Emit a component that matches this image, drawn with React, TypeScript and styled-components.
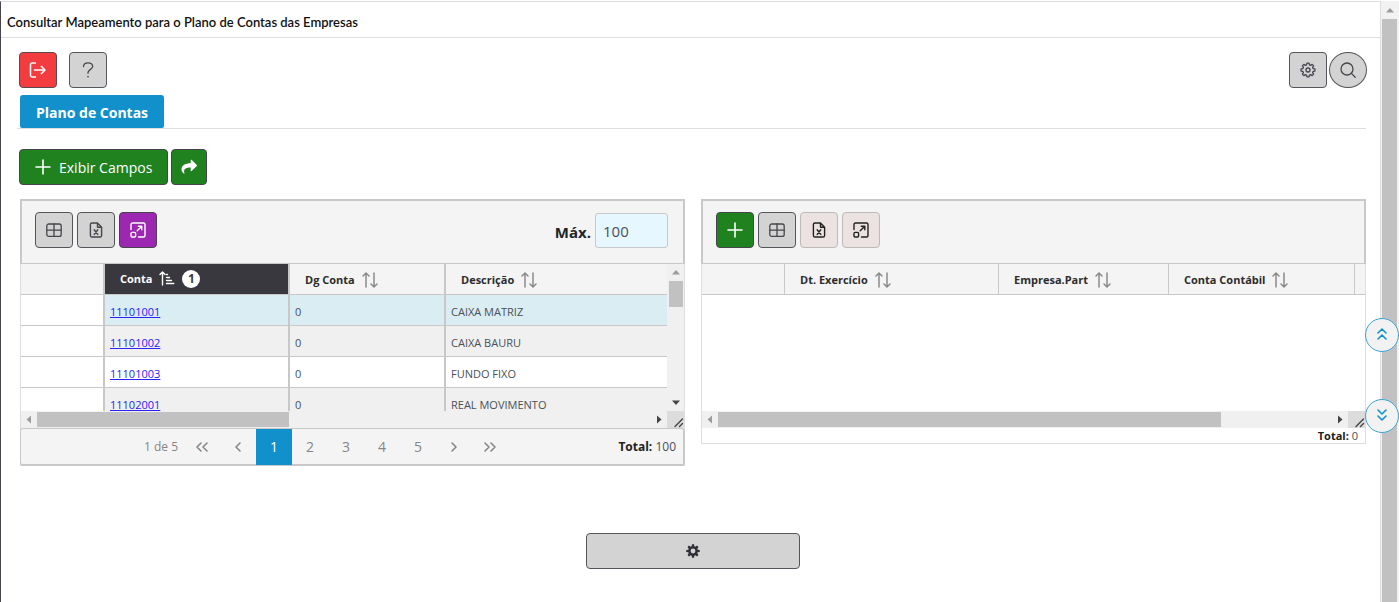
import React from "react";
import styled, { createGlobalStyle, css } from "styled-components";

const LINE = "#c8c8c8";
const LIGHT = "#dedede";
const PANEL = "#f4f4f4";
const BLUE = "#1190cb";
const GREEN = "#20811f";

const GlobalStyle = createGlobalStyle`
  * { box-sizing: border-box; }
  body {
    margin: 0;
    background: #fff;
    color: #212529;
    font-family: "Open Sans", "Noto Sans", sans-serif;
  }
  button, input { font-family: inherit; }
`;

const Page = styled.div`
  display: grid;
  grid-template-columns: minmax(0, 1fr) 18px;
  min-height: 100vh;
  padding-top: 1px;
`;

const Main = styled.main`
  border: 1px solid ${LIGHT};
  border-left-color: #46444f;
  border-bottom: 0;
  display: flex;
  flex-direction: column;
`;

const TitleBar = styled.header`
  height: 36px;
  padding: 0 6px;
  display: flex;
  align-items: center;
  border-bottom: 1px solid ${LIGHT};
`;

const Title = styled.h1`
  margin: 4px 0 0;
  font: 600 13px/20px Lato, sans-serif;
  color: #111;
`;

const Body = styled.div`
  padding: 14px 13px 0 18px;
`;

const Bar = styled.div<{ $gap: number }>`
  display: flex;
  align-items: center;
  gap: ${(p) => p.$gap}px;
`;

const Spacer = styled.span`
  flex: 1;
`;

type Tone = "gray" | "red" | "green" | "purple" | "muted";

const tones: Record<Tone, ReturnType<typeof css>> = {
  gray: css`background: #d3d3d3; color: #46464c; border-color: #55555c;`,
  red: css`background: #f23c3f; color: #fff; border-color: #5c4a50;`,
  green: css`background: ${GREEN}; color: #fff; border-color: #46444c;`,
  purple: css`background: #9c27b0; color: #fff; border-color: #46444c;`,
  muted: css`background: #ece2e2; color: #222; border-color: #bdb9b9;`,
};

const Button = styled.button<{ $tone: Tone; $round?: boolean; $size?: "wide" | "narrow" }>`
  display: inline-flex;
  align-items: center;
  justify-content: center;
  gap: 8px;
  height: 36px;
  min-width: ${(p) => (p.$size === "narrow" ? 36 : 38)}px;
  padding: ${(p) => (p.$size === "wide" ? "0 15px" : "0")};
  border: 1px solid;
  border-radius: ${(p) => (p.$round ? "50%" : "4px")};
  font-size: 14px;
  cursor: pointer;
  ${(p) => tones[p.$tone]}
`;

const Tabs = styled.div`
  display: flex;
  padding: 7px 0 0 3px;
  margin: 0 1px 20px -2px;
  border-bottom: 1px solid ${LIGHT};
`;

const Tab = styled.button`
  height: 33px;
  padding: 1px 16px 0;
  border: 0;
  border-radius: 3px 3px 2px 2px;
  background: ${BLUE};
  color: #fff;
  font-size: 14px;
  font-weight: 700;
`;

const Panels = styled.div`
  display: grid;
  grid-template-columns: minmax(0, 1fr) minmax(0, 1fr);
  align-items: start;
  gap: 16px;
  padding: 14px 1px 0;
`;

const Panel = styled.section`
  border: 1px solid ${LIGHT};
`;

const PanelTop = styled.div`
  display: flex;
  align-items: center;
  gap: 4px;
  height: 65px;
  margin: -1px -1px 0;
  padding: 0 15px 4px 13px;
  background: ${PANEL};
  border: 2px solid ${LINE};
  border-bottom: 1px solid ${LINE};
`;

const MaxLabel = styled.label`
  font-size: 15px;
  font-weight: 700;
  padding-top: 3px;
`;

const MaxInput = styled.input`
  width: 73px;
  height: 35px;
  padding: 2px 7px 0;
  border: 1px solid ${LINE};
  border-radius: 3px;
  background: #e6f7ff;
  color: #495057;
  font-size: 15px;
`;

const View = styled.div`
  display: grid;
  grid-template-columns: minmax(0, 1fr) auto;
  grid-template-rows: 147px 17px;
`;

const Clip = styled.div<{ $full?: boolean }>`
  overflow: hidden;
  ${(p) => p.$full && css`grid-column: 1 / -1;`}
`;

const Table = styled.table`
  width: 100%;
  table-layout: fixed;
  border-collapse: separate;
  border-spacing: 0;
`;

const Col = styled.col<{ $w?: number }>`
  width: ${(p) => (p.$w ? `${p.$w}px` : "auto")};
`;

const Th = styled.th<{ $active?: boolean; $thick?: boolean }>`
  height: 31px;
  padding: 0 0 0 15px;
  text-align: left;
  font-size: 11px;
  line-height: 16px;
  font-weight: 700;
  white-space: nowrap;
  background: ${(p) => (p.$active ? "#38383e" : PANEL)};
  color: ${(p) => (p.$active ? "#fff" : "#2c2c2c")};
  border-right: ${(p) => (p.$thick ? 2 : 1)}px solid ${LINE};
  border-bottom: 1px solid ${LINE};
  &:last-child { border-right: 0; }
`;

const Td = styled.td`
  height: 31px;
  padding: 3px 0 0 5px;
  font-size: 11px;
  line-height: 16px;
  color: #495057;
  white-space: nowrap;
  border-right: 2px solid ${LINE};
  border-bottom: 1px solid ${LINE};
  &:last-child { border-right: 0; }
`;

const Row = styled.tr<{ $bg: string }>`
  background: ${(p) => p.$bg};
  td:first-child { background: #fff; }
`;

const Link = styled.a`
  color: #2a22f5;
  text-decoration: underline;
`;

const HeadLabel = styled.span`
  display: inline-flex;
  align-items: center;
  gap: 7px;
  vertical-align: middle;
`;

const Badge = styled.span`
  width: 18px;
  height: 18px;
  border-radius: 50%;
  background: #fff;
  color: #38383e;
  font-size: 12px;
  line-height: 18px;
  text-align: center;
`;

const ScrollTrack = styled.div<{ $vertical?: boolean }>`
  display: flex;
  flex-direction: ${(p) => (p.$vertical ? "column" : "row")};
  align-items: center;
  background: #f0f0f0;
  min-width: 17px;
`;

const ThumbLane = styled.div<{ $vertical?: boolean }>`
  flex: 1;
  align-self: stretch;
  padding: ${(p) => (p.$vertical ? "0 1px 0 2px" : "1px 0")};
`;

const Thumb = styled.div<{ $size: number; $vertical?: boolean }>`
  background: #c1c1c1;
  ${(p) =>
    p.$vertical
      ? css`height: ${p.$size}%;`
      : css`width: ${p.$size}%; height: 100%;`}
`;

const Corner = styled.div`
  width: 17px;
  height: 17px;
  background: #dcdcdc;
`;

const Paginator = styled.nav`
  display: flex;
  align-items: center;
  height: 38px;
  margin: 0 -1px -1px;
  padding: 0 7px 0 123px;
  border: 1px solid ${LINE};
  border-bottom-width: 2px;
  border-right-width: 2px;
  border-radius: 3px;
  background: ${PANEL};
  color: #868686;
  font-size: 12px;
`;

const PageInfo = styled.span`
  width: 40px;
  white-space: nowrap;
`;

const PageButton = styled.button<{ $active?: boolean }>`
  display: flex;
  align-items: center;
  justify-content: center;
  width: 36px;
  height: 36px;
  flex: none;
  padding: 0;
  border: 0;
  background: ${(p) => (p.$active ? BLUE : "transparent")};
  color: ${(p) => (p.$active ? "#fff" : "#868686")};
  font-size: 14px;
`;

const Total = styled.span<{ $small?: boolean }>`
  font-size: ${(p) => (p.$small ? 11 : 12)}px;
  color: #495057;
  white-space: nowrap;
  b { color: #222; }
`;

const PanelFoot = styled.div`
  display: flex;
  justify-content: flex-end;
  height: 15px;
  line-height: 15px;
  padding-right: 7px;
`;

const Footer = styled.footer`
  display: flex;
  justify-content: center;
  padding: 67px 0 32px;
`;

const FooterButton = styled(Button)`
  width: 214px;
`;

const PageScroll = styled.aside`
  display: flex;
  flex-direction: column;
  align-items: center;
  background: #f2f2f2;
  padding: 1px 2px 0 1px;
`;

const PageThumb = styled.div`
  flex: 1;
  align-self: stretch;
  background: #c1c1c1;
`;

const Floating = styled.div`
  position: fixed;
  right: 0;
  top: 318px;
  display: flex;
  flex-direction: column;
  gap: 47px;
`;

const RoundButton = styled.button`
  display: flex;
  align-items: center;
  justify-content: center;
  width: 34px;
  height: 34px;
  padding: 0 0 3px;
  border: 1px solid #39a3d3;
  border-radius: 50%;
  background: #f2f2f2;
  color: ${BLUE};
`;

const Svg = styled.svg`
  display: block;
  flex: none;
`;

type IconProps = { w?: number; h?: number; sw?: number; children: React.ReactNode };

const Icon = ({ w = 16, h = 16, sw = 1.2, children }: IconProps) => (
  <Svg
    width={w}
    height={h}
    viewBox={`0 0 ${w} ${h}`}
    fill="none"
    stroke="currentColor"
    strokeWidth={sw}
    strokeLinecap="round"
    strokeLinejoin="round"
    aria-hidden="true"
  >
    {children}
  </Svg>
);

const ExitIcon = () => (
  <Icon w={18} sw={1.5}>
    <path d="M6.5 1H3.2Q1.5 1 1.5 2.7V13.3Q1.5 15 3.2 15H6.5M5.5 8H16M12.3 4.2L16 8L12.3 11.8" />
  </Icon>
);
const QuestionIcon = () => (
  <Icon sw={1.3}>
    <path d="M3.5 4.5C3.5 2.3 5.3 .8 8 .8S12.7 2.4 12.7 4.6C12.7 7.2 8 7.6 8 10.6V11.2" />
    <circle cx="8" cy="14.6" r=".6" fill="currentColor" stroke="none" />
    <path d="M8 14.5V14.8" />
  </Icon>
);
const gearPoints = (cx: number, cy: number, ro: number, ri: number, teeth: number) => {
  const pts: string[] = [];
  for (let i = 0; i < teeth; i++) {
    const base = (i / teeth) * Math.PI * 2 - Math.PI / 2;
    const step = Math.PI / teeth;
    [
      [ri, -0.72],
      [ro, -0.38],
      [ro, 0.38],
      [ri, 0.72],
    ].forEach(([r, k]) => {
      const a = base + k * step;
      pts.push(`${(cx + r * Math.cos(a)).toFixed(2)} ${(cy + r * Math.sin(a)).toFixed(2)}`);
    });
  }
  return `M${pts.join("L")}Z`;
};
const GearIcon = () => (
  <Icon sw={1.3}>
    <path d={gearPoints(8, 8, 7, 5.3, 8)} />
    <circle cx="8" cy="8" r="2" />
  </Icon>
);
const SolidGearIcon = () => (
  <Icon w={14} h={14} sw={0}>
    <path
      d={`${gearPoints(7, 7, 6.8, 4.9, 8)}M7 4.6a2.4 2.4 0 1 0 0 4.8a2.4 2.4 0 1 0 0-4.8Z`}
      fill="#2f2f38"
      fillRule="evenodd"
    />
  </Icon>
);
const SearchIcon = () => (
  <Icon sw={1.3}>
    <circle cx="7" cy="7" r="6" />
    <path d="M11.4 11.4L15.2 15.2" />
  </Icon>
);
const PlusIcon = () => (
  <Icon sw={1.6}>
    <path d="M8 1V15M1 8H15" />
  </Icon>
);
const ShareIcon = () => (
  <Icon sw={0}>
    <path
      d="M9.7 1.2V4.3C4 4.4 .5 6.3 .5 10.6C.5 12.3 1.5 13.8 2.8 14.6C3.2 14.8 3.5 14.5 3.4 14C2.2 10.2 4.4 8.7 9.7 8.6V11.7C9.7 12.2 10.2 12.4 10.6 12.1L15.8 7C16.1 6.7 16.1 6.3 15.8 6L10.6 .8C10.2 .5 9.7 .7 9.7 1.2Z"
      fill="currentColor"
    />
  </Icon>
);
const TableIcon = () => (
  <Icon sw={1.3}>
    <rect x=".8" y="2" width="14.4" height="12.4" rx="2" />
    <path d="M8 2V14.4M.8 8.2H15.2" />
  </Icon>
);
const ExcelIcon = () => (
  <Icon sw={1.4}>
    <path d="M9.5 1H4Q2.4 1 2.4 2.6V13.4Q2.4 15 4 15H12Q13.6 15 13.6 13.4V5.2ZM9.5 1V5.2H13.6M6.2 7.8L9.8 12.4M9.8 7.8L6.2 12.4" />
  </Icon>
);
const ExpandIcon = () => (
  <Icon sw={1.4}>
    <rect x="1" y="10.4" width="4.6" height="4.6" rx="1" />
    <path d="M1 7.5V2.5Q1 1 2.5 1H13.5Q15 1 15 2.5V13.5Q15 15 13.5 15H8.5M7.2 8.8L11.6 4.4M8.3 4.2H11.8V7.7" />
  </Icon>
);
const SortIcon = () => (
  <Svg width="16" height="16" viewBox="0 0 16 16" fill="none" stroke="#8b8b8b" strokeWidth="1.5" strokeLinecap="round" strokeLinejoin="round" aria-hidden="true">
    <path d="M4 15V1.2M1 4L4 1L7 4M12 1V14.8M9 12L12 15L15 12" />
  </Svg>
);
const SortedIcon = () => (
  <Icon sw={1.4}>
    <path d="M3.5 14V1.2M1 3.6L3.5 1L6 3.6M7.5 3.5H8.5M7.5 6.5H10.5M7.5 9.5H12.5M7.5 12.5H14.8" />
  </Icon>
);
const Chevrons = ({ dir, double }: { dir: "left" | "right" | "up" | "down"; double?: boolean }) => {
  const turn = { left: 0, up: 90, right: 180, down: 270 }[dir];
  return (
    <Icon w={14} h={14} sw={1.6}>
      <g transform={`rotate(${turn} 7 7)`}>
        <path d={double ? "M6 3L2 7L6 11M12 3L8 7L12 11" : "M9 3L5 7L9 11"} />
      </g>
    </Icon>
  );
};
const Arrow = ({ dir, dark }: { dir: "left" | "right" | "up" | "down"; dark?: boolean }) => {
  const turn = { left: 0, up: 90, right: 180, down: 270 }[dir];
  return (
    <Svg width="16" height="17" viewBox="0 0 16 17" aria-hidden="true">
      <path d="M5.5 8.5L10 4.5V12.5Z" fill={dark ? "#444" : "#9c9c9c"} transform={`rotate(${turn} 8 8.5)`} />
    </Svg>
  );
};
const Grip = () => (
  <Icon w={17} h={17} sw={1.4}>
    <path d="M8 15.5L15.5 8M12.5 15.5L15.5 12.5" stroke="#444" />
  </Icon>
);

const Scroll = ({ size, vertical }: { size: number; vertical?: boolean }) => (
  <ScrollTrack $vertical={vertical}>
    <Arrow dir={vertical ? "up" : "left"} />
    <ThumbLane $vertical={vertical}>
      <Thumb $size={size} $vertical={vertical} />
    </ThumbLane>
    <Arrow dir={vertical ? "down" : "right"} dark />
  </ScrollTrack>
);

const accounts = [
  { code: "11101001", digit: "0", name: "CAIXA MATRIZ", bg: "#d9edf3" },
  { code: "11101002", digit: "0", name: "CAIXA BAURU", bg: "#f0f0f0" },
  { code: "11101003", digit: "0", name: "FUNDO FIXO", bg: "#ffffff" },
  { code: "11102001", digit: "0", name: "REAL MOVIMENTO", bg: "#f0f0f0" },
];

const SortableHead = ({ children, thick }: { children: string; thick?: boolean }) => (
  <Th scope="col" $thick={thick}>
    <HeadLabel>
      {children}
      <SortIcon />
    </HeadLabel>
  </Th>
);

const AccountsPanel = () => (
  <Panel>
    <PanelTop>
      <Button $tone="gray" aria-label="Colunas"><TableIcon /></Button>
      <Button $tone="gray" aria-label="Exportar Excel"><ExcelIcon /></Button>
      <Button $tone="purple" aria-label="Expandir"><ExpandIcon /></Button>
      <Spacer />
      <MaxLabel htmlFor="max">Máx.</MaxLabel>
      <MaxInput id="max" defaultValue="100" />
    </PanelTop>
    <View>
      <Clip>
        <Table>
          <colgroup>
            <Col $w={84} />
            <Col $w={185} />
            <Col $w={156} />
            <Col />
          </colgroup>
          <thead>
            <tr>
              <Th $thick />
              <Th scope="col" $active $thick>
                <HeadLabel>
                  Conta
                  <SortedIcon />
                  <Badge>1</Badge>
                </HeadLabel>
              </Th>
              <SortableHead thick>Dg Conta</SortableHead>
              <SortableHead>Descrição</SortableHead>
            </tr>
          </thead>
          <tbody>
            {accounts.map((a) => (
              <Row key={a.code} $bg={a.bg}>
                <Td />
                <Td><Link href={`#${a.code}`}>{a.code}</Link></Td>
                <Td>{a.digit}</Td>
                <Td>{a.name}</Td>
              </Row>
            ))}
          </tbody>
        </Table>
      </Clip>
      <Scroll vertical size={23} />
      <Scroll size={41} />
      <Corner><Grip /></Corner>
    </View>
    <Paginator aria-label="Paginação">
      <PageInfo>1 de 5</PageInfo>
      <PageButton aria-label="Primeira"><Chevrons dir="left" double /></PageButton>
      <PageButton aria-label="Anterior"><Chevrons dir="left" /></PageButton>
      {[1, 2, 3, 4, 5].map((n) => (
        <PageButton key={n} $active={n === 1}>{n}</PageButton>
      ))}
      <PageButton aria-label="Próxima"><Chevrons dir="right" /></PageButton>
      <PageButton aria-label="Última"><Chevrons dir="right" double /></PageButton>
      <Spacer />
      <Total><b>Total:</b> 100</Total>
    </Paginator>
  </Panel>
);

const MappingPanel = () => (
  <Panel>
    <PanelTop>
      <Button $tone="green" aria-label="Adicionar"><PlusIcon /></Button>
      <Button $tone="gray" aria-label="Colunas"><TableIcon /></Button>
      <Button $tone="muted" aria-label="Exportar Excel"><ExcelIcon /></Button>
      <Button $tone="muted" aria-label="Expandir"><ExpandIcon /></Button>
    </PanelTop>
    <View>
      <Clip $full>
        <Table>
          <colgroup>
            <Col $w={83} />
            <Col $w={214} />
            <Col $w={170} />
            <Col $w={186} />
            <Col />
          </colgroup>
          <thead>
            <tr>
              <Th />
              <SortableHead>Dt. Exercício</SortableHead>
              <SortableHead>Empresa.Part</SortableHead>
              <SortableHead>Conta Contábil</SortableHead>
              <Th />
            </tr>
          </thead>
          <tbody />
        </Table>
      </Clip>
      <Scroll size={82} />
      <Corner><Grip /></Corner>
    </View>
    <PanelFoot>
      <Total $small><b>Total:</b> 0</Total>
    </PanelFoot>
  </Panel>
);

export default function App() {
  return (
    <>
      <GlobalStyle />
      <Page>
        <Main>
          <TitleBar>
            <Title>Consultar Mapeamento para o Plano de Contas das Empresas</Title>
          </TitleBar>
          <Body>
            <Bar $gap={12}>
              <Button $tone="red" aria-label="Sair"><ExitIcon /></Button>
              <Button $tone="gray" aria-label="Ajuda"><QuestionIcon /></Button>
              <Spacer />
              <Bar $gap={2}>
                <Button $tone="gray" aria-label="Configurações"><GearIcon /></Button>
                <Button $tone="gray" $round aria-label="Pesquisar"><SearchIcon /></Button>
              </Bar>
            </Bar>
            <Tabs role="tablist">
              <Tab role="tab" aria-selected="true">Plano de Contas</Tab>
            </Tabs>
            <Bar $gap={3}>
              <Button $tone="green" $size="wide"><PlusIcon />Exibir Campos</Button>
              <Button $tone="green" $size="narrow" aria-label="Compartilhar"><ShareIcon /></Button>
            </Bar>
            <Panels>
              <AccountsPanel />
              <MappingPanel />
            </Panels>
            <Footer>
              <FooterButton $tone="gray" aria-label="Opções"><SolidGearIcon /></FooterButton>
            </Footer>
          </Body>
        </Main>
        <PageScroll>
          <Arrow dir="up" />
          <PageThumb />
        </PageScroll>
      </Page>
      <Floating>
        <RoundButton aria-label="Ir ao topo"><Chevrons dir="up" double /></RoundButton>
        <RoundButton aria-label="Ir ao fim"><Chevrons dir="down" double /></RoundButton>
      </Floating>
    </>
  );
}
